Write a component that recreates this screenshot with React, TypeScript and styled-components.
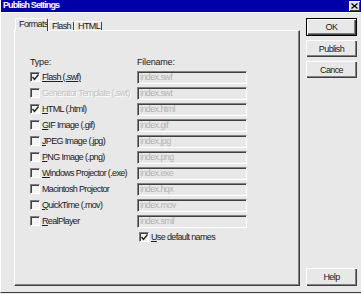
import React from 'react';
import styled, { createGlobalStyle } from 'styled-components';

const Global = createGlobalStyle`
  html, body { margin: 0; padding: 0; background: #e8e8e8; }
  body { width: 361px; height: 294px; overflow: hidden; font-family: "Liberation Sans", Arial, sans-serif; }
  * { box-sizing: border-box; }
`;

const Window = styled.div`
  width: 361px;
  height: 293px;
  background: #e8e8e8;
  border-left: 1px solid #ffffff;
  border-bottom: 1px solid #404040;
  display: flex;
  flex-direction: column;
`;

const TitleBar = styled.div`
  height: 13px;
  background: #0000a8;
  border-bottom: 1px solid #ffffff;
  display: flex;
  align-items: center;
  justify-content: space-between;
  padding: 0 1px 1px 2px;
`;

const Title = styled.span`
  color: #ffffff;
  font-weight: bold;
  font-size: 9px;
  letter-spacing: -0.9px;
  line-height: 11px;
`;

const CloseBox = styled.div`
  width: 11px;
  height: 10px;
  background: #e0e0e0;
  box-shadow: inset 1px 1px 0 #ffffff, inset -1px -1px 0 #404040;
  display: flex;
  align-items: center;
  justify-content: center;
`;

const Body = styled.div`
  flex: 1;
  display: flex;
  gap: 6px;
  padding: 5px 4px 6px 13px;
`;

const Left = styled.div`
  width: 287px;
  display: flex;
  flex-direction: column;
`;

const TabRow = styled.div`
  height: 12px;
  display: flex;
  align-items: flex-end;
  padding-left: 1px;
  position: relative;
  z-index: 1;
`;

const Tab = styled.div<{ $active?: boolean; $w: number }>`
  width: ${p => p.$w}px;
  height: ${p => (p.$active ? 13 : 9)}px;
  margin-bottom: ${p => (p.$active ? -1 : 0)}px;
  background: #e8e8e8;
  border-top: 1px solid #ffffff;
  border-left: 1px solid #ffffff;
  border-right: 1px solid #404040;
  border-radius: 2px 2px 0 0;
  font-size: 9px;
  letter-spacing: -0.6px;
  color: #202020;
  line-height: ${p => (p.$active ? 10 : 8)}px;
  padding-left: 3px;
  white-space: nowrap;
  overflow: hidden;
`;

const Panel = styled.div`
  flex: 1;
  border-top: 1px solid #ffffff;
  border-left: 1px solid #ffffff;
  border-right: 1px solid #404040;
  border-bottom: 1px solid #404040;
  box-shadow: inset -1px -1px 0 #808080;
  padding: 23px 0 0 15px;
`;

const Grid = styled.div`
  display: grid;
  grid-template-columns: 107px 110px;
  grid-template-rows: 15px;
  grid-auto-rows: 16px;
  align-items: center;
`;

const Header = styled.div`
  font-size: 9px;
  letter-spacing: -0.2px;
  color: #202020;
  white-space: nowrap;
`;

const CheckCell = styled.div<{ $col?: number }>`
  display: flex;
  align-items: center;
  gap: 2px;
  grid-column: ${p => p.$col ?? 1};
  padding-left: ${p => (p.$col === 2 ? 2 : 0)}px;
`;

const Box = styled.div`
  width: 10px;
  height: 10px;
  flex: none;
  background: #f4f4f4;
  border-top: 1px solid #808080;
  border-left: 1px solid #808080;
  border-bottom: 1px solid #ffffff;
  border-right: 1px solid #ffffff;
  box-shadow: inset 1px 1px 0 #404040;
  display: flex;
  align-items: center;
  justify-content: center;
`;

const Label = styled.span<{ $disabled?: boolean; $focus?: boolean }>`
  font-size: 9px;
  letter-spacing: -0.65px;
  white-space: nowrap;
  color: ${p => (p.$disabled ? '#c4c4c4' : '#202020')};
  text-shadow: ${p => (p.$disabled ? '1px 1px 0 #ffffff' : 'none')};
  text-decoration: ${p => (p.$focus ? 'underline' : 'none')};
  u { text-decoration: underline; }
`;

const Field = styled.div`
  width: 110px;
  height: 13px;
  background: #e8e8e8;
  border-top: 1px solid #808080;
  border-left: 1px solid #808080;
  border-bottom: 1px solid #ffffff;
  border-right: 1px solid #ffffff;
  box-shadow: inset 1px 1px 0 #404040;
  color: #b4b4b4;
  font-size: 9px;
  letter-spacing: -0.6px;
  line-height: 10px;
  padding-left: 2px;
  white-space: nowrap;
  overflow: hidden;
`;

const Right = styled.div`
  width: 51px;
  display: flex;
  flex-direction: column;
  gap: 4px;
`;

const Button = styled.div<{ $default?: boolean }>`
  width: 51px;
  height: ${p => (p.$default ? 18 : 17)}px;
  background: #e8e8e8;
  border: ${p => (p.$default ? '1px solid #000000' : 'none')};
  box-shadow: inset 1px 1px 0 #ffffff, inset -1px -1px 0 #404040, inset -2px -2px 0 #808080;
  display: flex;
  align-items: center;
  justify-content: center;
  font-size: 9px;
  letter-spacing: -0.6px;
  color: #202020;
  &:last-child { margin-top: auto; height: 18px; }
`;

const Check = () => (
  <svg width="7" height="7" viewBox="0 0 7 7">
    <path d="M0.5 3 L2.5 5.5 L6.5 0.5" stroke="#202020" strokeWidth="1.4" fill="none" />
  </svg>
);

type Row = { label: React.ReactNode; file: string; checked?: boolean; disabled?: boolean; focus?: boolean };

const rows: Row[] = [
  { label: <>Flash (.swf)</>, file: 'index.swf', checked: true, focus: true },
  { label: <>Generator Template (.swt)</>, file: 'index.swt', disabled: true },
  { label: <><u>H</u>TML (.html)</>, file: 'index.html', checked: true },
  { label: <><u>G</u>IF Image (.gif)</>, file: 'index.gif' },
  { label: <><u>J</u>PEG Image (.jpg)</>, file: 'index.jpg' },
  { label: <><u>P</u>NG Image (.png)</>, file: 'index.png' },
  { label: <><u>W</u>indows Projector (.exe)</>, file: 'index.exe' },
  { label: <>Macintosh Projector</>, file: 'index.hqx' },
  { label: <><u>Q</u>uickTime (.mov)</>, file: 'index.mov' },
  { label: <><u>R</u>ealPlayer</>, file: 'index.smil' },
];

export default function App() {
  return (
    <>
      <Global />
      <Window>
        <TitleBar>
          <Title>Publish Settings</Title>
          <CloseBox>
            <svg width="7" height="6" viewBox="0 0 7 6">
              <path d="M0.5 0.5 L6.5 5.5 M6.5 0.5 L0.5 5.5" stroke="#000" strokeWidth="1.3" />
            </svg>
          </CloseBox>
        </TitleBar>
        <Body>
          <Left>
            <TabRow>
              <Tab $active $w={33}>Formats</Tab>
              <Tab $w={26}>Flash</Tab>
              <Tab $w={28}>HTML</Tab>
            </TabRow>
            <Panel>
              <Grid>
                <Header>Type:</Header>
                <Header>Filename:</Header>
                {rows.map((r, i) => (
                  <React.Fragment key={i}>
                    <CheckCell>
                      <Box>{r.checked && <Check />}</Box>
                      <Label $disabled={r.disabled} $focus={r.focus}>{r.label}</Label>
                    </CheckCell>
                    <Field>{r.file}</Field>
                  </React.Fragment>
                ))}
                <CheckCell $col={2}>
                  <Box><Check /></Box>
                  <Label><u>U</u>se default names</Label>
                </CheckCell>
              </Grid>
            </Panel>
          </Left>
          <Right>
            <Button $default>OK</Button>
            <Button>Publish</Button>
            <Button>Cance</Button>
            <Button>Help</Button>
          </Right>
        </Body>
      </Window>
    </>
  );
}
